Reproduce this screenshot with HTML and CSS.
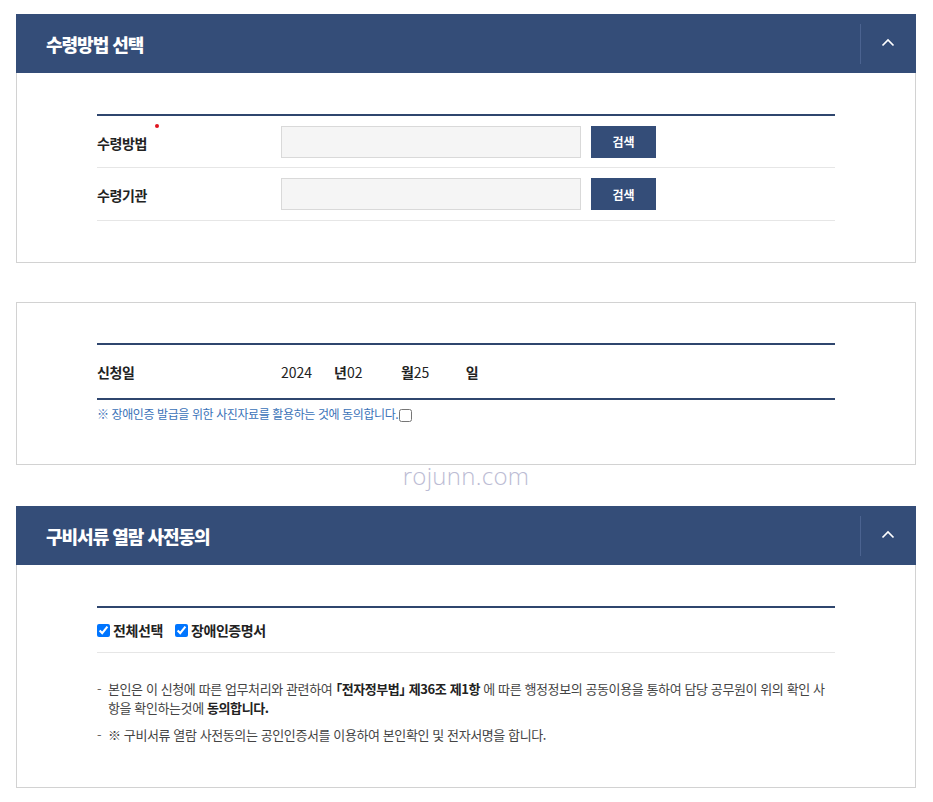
FILE: index.html
```html
<!DOCTYPE html>
<html lang="ko">
<head>
<meta charset="utf-8">
<title>수령방법 선택</title>
<link rel="stylesheet" href="styles.css">
</head>
<body>
<div class="page">
  <section class="panel">
    <header class="panel-head">
      <h2 class="panel-title">수령방법 선택</h2>
      <button class="toggle" type="button" aria-label="접기">
        <svg width="14" height="9" viewBox="0 0 14 9"><path d="M1.5 7.5 L7 2 L12.5 7.5" fill="none" stroke="#fff" stroke-width="1.7"/></svg>
      </button>
    </header>
    <div class="panel-body">
      <div class="form-table">
        <div class="form-row">
          <div class="label">수령방법<span class="req"></span></div>
          <div class="field"><input class="text-input" type="text"><button class="btn" type="button">검색</button></div>
        </div>
        <div class="form-row">
          <div class="label">수령기관</div>
          <div class="field"><input class="text-input" type="text"><button class="btn" type="button">검색</button></div>
        </div>
      </div>
    </div>
  </section>

  <section class="panel panel-plain">
    <div class="panel-body">
      <div class="form-table date-table">
        <div class="form-row">
          <div class="label">신청일</div>
          <div class="field date">
            <span class="num n1">2024</span><span class="unit">년</span><span class="num n2">02</span><span class="unit">월</span><span class="num n3">25</span><span class="unit">일</span>
          </div>
        </div>
      </div>
      <p class="notice">※ 장애인증 발급을 위한 사진자료를 활용하는 것에 동의합니다.<input class="notice-check" type="checkbox"></p>
    </div>
  </section>

  <div class="watermark">rojunn.com</div>

  <section class="panel panel-last">
    <header class="panel-head">
      <h2 class="panel-title">구비서류 열람 사전동의</h2>
      <button class="toggle" type="button" aria-label="접기">
        <svg width="14" height="9" viewBox="0 0 14 9"><path d="M1.5 7.5 L7 2 L12.5 7.5" fill="none" stroke="#fff" stroke-width="1.7"/></svg>
      </button>
    </header>
    <div class="panel-body">
      <div class="checks">
        <label class="check"><input type="checkbox" checked>전체선택</label>
        <label class="check"><input type="checkbox" checked>장애인증명서</label>
      </div>
      <ul class="desc">
        <li>본인은 이 신청에 따른 업무처리와 관련하여 <b class="law">「전자정부법」 제36조 제1항</b> 에 따른 행정정보의 공동이용을 통하여 담당 공무원이 위의 확인 사항을 확인하는것에 <b>동의합니다.</b></li>
        <li>※ 구비서류 열람 사전동의는 공인인증서를 이용하여 본인확인 및 전자서명을 합니다.</li>
      </ul>
    </div>
  </section>
</div>
</body>
</html>
```

FILE: styles.css
```css
* { box-sizing: border-box; }
html, body { margin: 0; padding: 0; background: #fff; }
body {
  font-family: "Noto Sans CJK KR", "Noto Sans", sans-serif;
  color: #222;
}
.page {
  width: 900px;
  margin: 14px 0 0 16px;
}
.panel { border: 1px solid #d2d2d2; border-top: 0; }
.panel-plain { border-top: 1px solid #d2d2d2; margin-top: 39px; }
.panel-head {
  height: 59px;
  margin: 0 -1px;
  background: #344d78;
  display: flex;
  align-items: center;
  justify-content: space-between;
}
.panel-title {
  margin: 0 0 0 30px;
  font-size: 18px;
  font-weight: 900;
  color: #fff;
  letter-spacing: -1px;
}
.toggle {
  width: 56px;
  height: 40px;
  border: 0;
  border-left: 1px solid #4b6390;
  background: transparent;
  display: flex;
  align-items: center;
  justify-content: center;
  padding: 0 2px 2px 0;
  cursor: pointer;
}
.panel-body {
  padding: 41px 80px 41px 80px;
}
.form-table { border-top: 2px solid #2f466e; }
.form-row {
  display: flex;
  align-items: center;
  height: 53px;
  border-bottom: 1px solid #e6e6e6;
}
.form-row:first-child { height: 52px; }
.label {
  width: 184px;
  font-size: 14px;
  font-weight: 700;
  color: #222;
  position: relative;
  letter-spacing: -0.4px;
  padding-top: 2px;
}
.req {
  position: absolute;
  width: 4px;
  height: 4px;
  border-radius: 50%;
  background: #e0141e;
  left: 58px;
  top: -7px;
}
.field { display: flex; align-items: center; }
.text-input {
  width: 300px;
  height: 32px;
  border: 1px solid #d9d9d9;
  background: #f5f5f5;
  margin: 0;
}
.btn {
  width: 65px;
  height: 32px;
  margin-left: 10px;
  border: 0;
  background: #344d78;
  color: #fff;
  font-family: inherit;
  font-size: 12px;
  font-weight: 700;
  padding: 0;
}
.panel-plain .panel-body { padding-top: 40px; padding-bottom: 41px; }
.date-table { border-bottom: 2px solid #2f466e; }
.date-table .form-row { border-bottom: 0; height: 53px; }
.date-table .label { padding-top: 0; }
.date { font-size: 14px; color: #222; }
.num { display: inline-block; }
.n1 { width: 53px; }
.n2 { width: 54px; }
.n3 { width: 52px; }
.unit { display: inline-block; font-weight: 700; }
.notice {
  margin: 5px 0 0 0;
  font-size: 12px;
  color: #3a72b8;
  letter-spacing: -0.4px;
  line-height: 18px;
  display: flex;
  align-items: center;
}
.notice-check { margin: 2px 0 0 1px; width: 13px; height: 13px; }
.watermark {
  height: 41px;
  text-align: center;
  font-family: "Open Sans", "Noto Sans", sans-serif;
  font-weight: 300;
  font-size: 24px;
  line-height: 22px;
  color: #bcbcd4;
  letter-spacing: 0.3px;
}
.checks {
  border-top: 2px solid #2f466e;
  border-bottom: 1px solid #e6e6e6;
  height: 47px;
  display: flex;
  align-items: center;
  gap: 12px;
}
.check {
  display: flex;
  align-items: center;
  font-size: 14px;
  font-weight: 700;
  color: #222;
  letter-spacing: -0.4px;
}
.check input { margin: 0 3px 0 0; width: 13px; height: 13px; }
.desc {
  list-style: none;
  margin: 0;
  padding: 26px 0 0 0;
  font-size: 13px;
  color: #444;
  line-height: 19px;
  letter-spacing: -0.4px;
}
.desc li {
  position: relative;
  padding-left: 11px;
  margin-bottom: 8px;
}
.desc li::before {
  content: "-";
  position: absolute;
  left: 0;
  top: 0;
  color: #666;
}
.desc b { font-weight: 700; color: #222; }
.law { font-feature-settings: "palt" 1; }
.panel-last .panel-body { padding-bottom: 35px; }
```
